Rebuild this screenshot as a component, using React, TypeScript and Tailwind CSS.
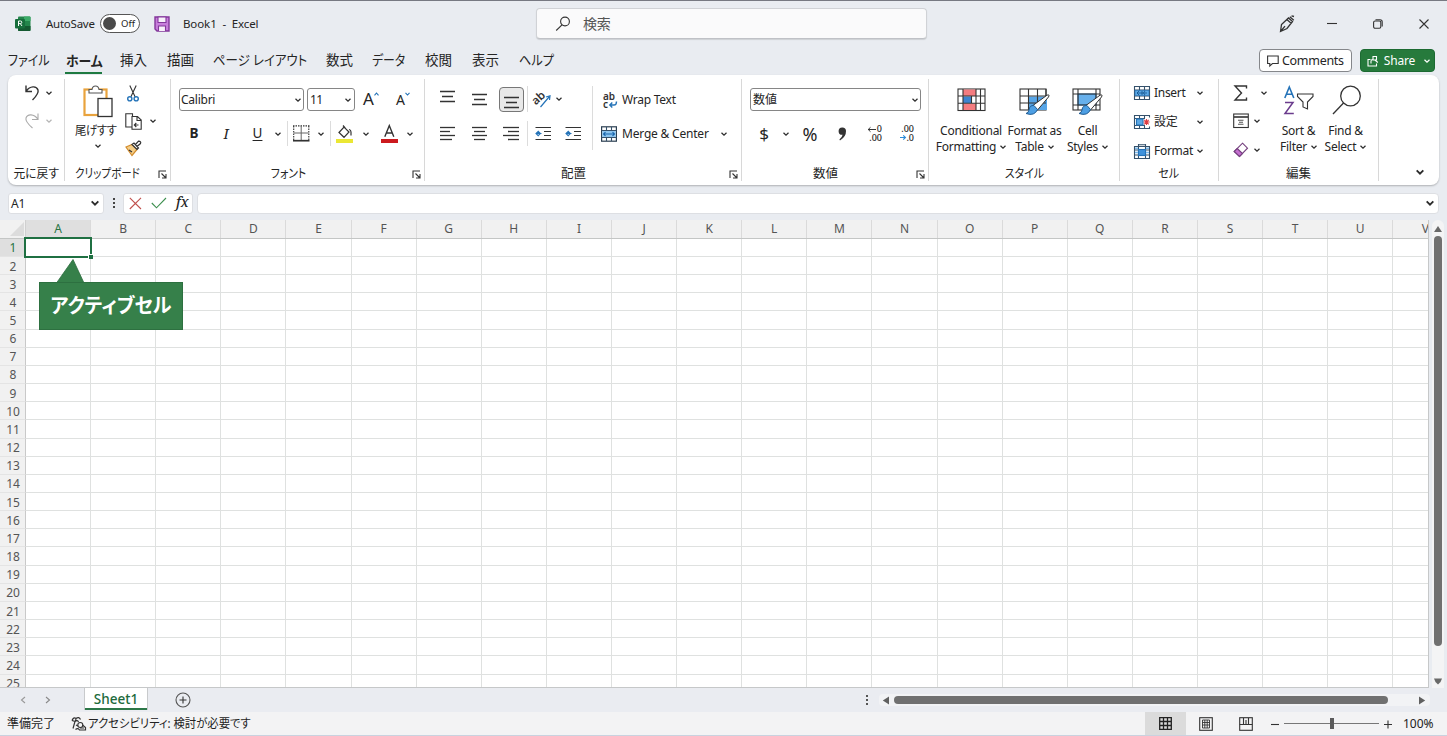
import React from "react";

const COLUMNS = "ABCDEFGHIJKLMNOPQRSTUV".split("");
const ROWS = Array.from({ length: 25 }, (_, i) => i + 1);

type IconProps = { w: number; h: number; children: React.ReactNode; className?: string };

function Icon({ w, h, children, className = "" }: IconProps) {
  return (
    <svg width={w} height={h} viewBox={`0 0 ${w} ${h}`} fill="none" stroke="#333" strokeWidth="1.1" className={`block shrink-0 overflow-visible ${className}`}>
      {children}
    </svg>
  );
}

function Chevron({ className = "", color = "#2b2b2b", strong = false }: { className?: string; color?: string; strong?: boolean }) {
  const s = strong ? 8 : 6;
  return (
    <svg width={s} height={s} viewBox="0 0 6 6" fill="none" stroke={color} strokeWidth={strong ? 1.4 : 1.25} className={`block shrink-0 ${className}`}>
      <path d="M0.5 1.8 L3 4.2 L5.5 1.8" />
    </svg>
  );
}

function Launcher() {
  return (
    <Icon w={9} h={9} className="self-center justify-self-end [grid-area:1/1]">
      <path d="M1 8V1H8M3.5 3.5L8 8M8 4V8H4" />
    </Icon>
  );
}

type GroupProps = { className: string; label: string; labelClass?: string; launcher?: boolean; children: React.ReactNode };

function Group({ className, label, labelClass = "", launcher = false, children }: GroupProps) {
  return (
    <section className={`mt-1 flex h-[102px] shrink-0 flex-col border-r border-[#d8d8d8] ${className}`}>
      <div className="flex h-[88px] shrink-0">{children}</div>
      <div className={`grid h-[17px] grid-cols-1 items-center ${launcher ? "pr-[3px]" : ""}`}>
        <span className={`justify-self-center whitespace-nowrap pt-px text-[12.5px] leading-none [font-feature-settings:'palt'] [grid-area:1/1] ${launcher ? "mr-4" : ""} ${labelClass}`}>{label}</span>
        {launcher && <Launcher />}
      </div>
    </section>
  );
}

function Lines({ xs }: { xs: [number, number][] }) {
  return (
    <Icon w={16} h={17}>
      {xs.map(([a, b], i) => (
        <path key={i} d={`M${a} ${i * 4 + 2.5}H${b}`} strokeWidth="1.3" />
      ))}
    </Icon>
  );
}

function ThreeLines() {
  return (
    <Icon w={16} h={13}>
      <path d="M0 1.5H15M2 6.5H13M0 11.5H15" strokeWidth="1.3" />
    </Icon>
  );
}

function IndentIcon() {
  return (
    <Icon w={16} h={15}>
      <path d="M0.5 1.5H16M9 5.5H16M9 9.5H16M0.5 13.5H16" strokeWidth="1.2" />
      <path d="M6.5 7.5H1M3.2 5.3L1 7.5L3.2 9.7L5.4 7.5Z" stroke="#2473b8" />
    </Icon>
  );
}

function CellsIcon({ kind }: { kind: "insert" | "delete" | "format" | "merge" }) {
  return (
    <Icon w={16} h={16}>
      {kind === "insert" && (
        <>
          <path d="M0.5 1.5H15.5V14.5H0.5ZM0.5 5H15.5M0.5 11H15.5M5.5 1.5V14.5M10.5 1.5V14.5" stroke="#35516b" />
          <rect x="1" y="5.5" width="14" height="5" fill="#5ba8e5" stroke="#2473b8" strokeWidth="0.7" />
          <path d="M3 8H13M5 6L3 8L5 10M8 6V10M11 6L9.5 8L11 10" stroke="#12508c" strokeWidth="0.8" />
        </>
      )}
      {kind === "delete" && (
        <>
          <path d="M15.5 3.5V1.5H0.5V14.5H15.5V12.5M0.5 4.5H11M0.5 11.5H11M5.5 1.5V14.5M10.5 1.5V4M10.5 11.5V14.5" stroke="#35516b" />
          <rect x="2.5" y="5" width="6.5" height="6" fill="#5ba8e5" stroke="#2473b8" />
          <path d="M10.3 5.8L14.7 10.4M14.7 5.8L10.3 10.4M9.6 8H15.6M12.5 5V11" stroke="#dc3b40" strokeWidth="1.1" />
        </>
      )}
      {kind === "format" && (
        <>
          <path d="M0.5 3.5H15.5V15.5H0.5ZM0.5 7H15.5M0.5 12H15.5M4.5 1V15.5M11.5 1V15.5M4.5 1.8H11.5" stroke="#35516b" />
          <rect x="4.5" y="6.5" width="7" height="6" fill="#3f92dc" stroke="#2473b8" />
          <path d="M1 5.2H4M12 5.2H15M1 9.5H4M12 9.5H15" stroke="#7db9ea" strokeWidth="1.6" />
        </>
      )}
      {kind === "merge" && (
        <>
          <rect x="0.6" y="0.8" width="14.8" height="14.4" stroke="#2b3f52" strokeWidth="1.2" />
          <path d="M0.5 4.5H15.5M0.5 11.5H15.5M5.5 1V4.5M10.5 1V4.5M5.5 11.5V15M10.5 11.5V15" stroke="#35516b" />
          <rect x="1.2" y="5" width="13.6" height="6" fill="#8cc4ee" stroke="none" />
          <path d="M2.5 8H13.5M4.5 6.2L2.5 8L4.5 9.8M11.5 6.2L13.5 8L11.5 9.8" stroke="#1765ac" />
        </>
      )}
    </Icon>
  );
}

function BrushOverlay() {
  return (
    <g transform="translate(1.5 0)">
      <path d="M11 18.5L26.5 7.2Q29.5 6 28 9L17 22Z" fill="#fff" strokeWidth="1" />
      <path d="M13.5 17.5Q9 17 8.5 22Q8 25 5.5 25.5Q14 28.5 17 21.5Z" fill="#4d9fe4" stroke="#215d94" strokeWidth="1" />
    </g>
  );
}

function TitleBar() {
  return (
    <header className="flex h-[46px] shrink-0 items-center border-t border-[#777982]">
      <Icon w={16} h={16} className="ml-[15px]">
        <rect x="3" y="0.5" width="12.5" height="14.5" rx="1" fill="#23854b" stroke="none" />
        <path d="M9 .5H14.5Q15.5 .5 15.5 1.5V5H9Z" fill="#3cab68" stroke="none" />
        <path d="M3 10H15.5V14Q15.5 15 14.5 15H4Q3 15 3 14Z" fill="#145931" stroke="none" />
        <rect x="0" y="3" width="10" height="9.5" rx="1" fill="#176e3c" stroke="none" />
        <path d="M3.5 10V5H5.4Q6.8 5 6.8 6.3T5.4 7.6H4M5.3 7.6L7 10" stroke="#fff" strokeWidth="1" />
      </Icon>
      <span className="ml-[15px] w-[49px] whitespace-nowrap text-[11.5px] tracking-[-0.25px]">AutoSave</span>
      <div className="ml-[5px] flex h-[19px] w-[40px] items-center rounded-full border border-[#555] bg-white pl-[2px]">
        <span className="size-[13px] rounded-full bg-[#4a4a4a]" />
        <span className="ml-[5px] text-[9.5px] leading-none">Off</span>
      </div>
      <Icon w={16} h={16} className="ml-[14px]">
        <path d="M1 1H15V15H3L1 13Z" fill="#c77ddb" stroke="#83379b" strokeWidth="1.4" />
        <path d="M4 1H12V6.5H4Z" fill="#f7effa" stroke="#83379b" />
        <path d="M4.5 15V10H11.5V15" fill="#f7effa" stroke="#83379b" />
      </Icon>
      <span className="ml-[13px] w-[80px] whitespace-pre text-[11.5px] tracking-[-0.1px]">Book1  -  Excel</span>
      <div className="ml-[273px] flex h-[31px] w-[391px] items-center rounded-[4px] border border-[#d0d2d6] border-b-[#bfc1c6] bg-[#fafafb] shadow-[0_1px_1px_rgba(0,0,0,0.12)]">
        <Icon w={16} h={16} className="ml-[18px]">
          <circle cx="10" cy="5.5" r="4.4" />
          <path d="M7 8.8L1.2 14.5" />
        </Icon>
        <span className="ml-[12px] text-[14px] leading-none tracking-[-0.3px] text-[#555]">検索</span>
      </div>
      <Icon w={18} h={18} className="ml-[351px]">
        <path d="M2.5 16.5L3.5 9.5L10.5 3L14.5 6.5L9 13.5ZM2.5 16.5L7 11.2M8.8 4.5L13.2 8.2M11.8 1.8L15.8 5.2M13.5 .8L16 1.5" strokeWidth="1.3" />
      </Icon>
      <Icon w={10} h={10} className="ml-[31px]"><path d="M0 4.5H10" /></Icon>
      <Icon w={10} h={10} className="ml-[36px]">
        <rect x="0.6" y="2" width="7.2" height="7.2" rx="1.5" />
        <path d="M2.5 .8H7Q9.2 .8 9.2 3V7.5" />
      </Icon>
      <Icon w={10} h={10} className="ml-[36px]"><path d="M0.5 .5L9.5 9.5M9.5 .5L.5 9.5" /></Icon>
    </header>
  );
}

function MenuBar() {
  const tab = "origin-left whitespace-nowrap shrink-0";
  return (
    <nav className="flex h-[29px] shrink-0 items-center text-[13.5px] [font-feature-settings:'palt']">
      <span className={`${tab} ml-[8px] w-[57px] scale-x-[0.89]`}>ファイル</span>
      <span className="mt-[1px] h-[25px] w-[37px] shrink-0 whitespace-nowrap border-b-[2px] border-[#1e7a41] text-center font-bold leading-[24px]">
        <span className="inline-block scale-x-[0.95]">ホーム</span>
      </span>
      <span className={`${tab} ml-[18px] w-[47px]`}>挿入</span>
      <span className={`${tab} w-[46px]`}>描画</span>
      <span className={`${tab} w-[113px] scale-x-[0.92]`}>ページ レイアウト</span>
      <span className={`${tab} w-[46px]`}>数式</span>
      <span className={`${tab} w-[53px] scale-x-[0.88]`}>データ</span>
      <span className={`${tab} w-[47px]`}>校閲</span>
      <span className={`${tab} w-[47px]`}>表示</span>
      <span className={`${tab} w-[40px] scale-x-[0.9]`}>ヘルプ</span>
      <button className="ml-auto flex h-[23px] w-[93px] items-center rounded-[4px] border border-[#85878b] bg-white pl-[7px]">
        <Icon w={12} h={12}><path d="M.6 1H11.2V8.5H5.5L2.8 11V8.5H.6Z" /></Icon>
        <span className="ml-[3px] whitespace-nowrap pt-px text-[12.5px] tracking-[-0.3px]">Comments</span>
      </button>
      <button className="ml-[8px] mr-[12px] flex h-[23px] w-[75px] items-center rounded-[4px] border border-[#1c6a32] bg-[#267a3c] pl-[6px] text-white">
        <Icon w={12} h={12}>
          <path d="M3.5 4.5H1V11H9.5V8.5M4 8.5V6Q4 4.5 6 4.5M6 1.5H9.5V5H6Z" stroke="#fff" />
          <path d="M8 5L10.8 7.5" stroke="#fff" />
        </Icon>
        <span className="ml-[4px] w-[33px] pt-px text-[12px] tracking-[-0.15px]">Share</span>
        <Chevron color="#fff" className="ml-[8px]" />
      </button>
    </nav>
  );
}

function Divider({ className = "" }: { className?: string }) {
  return <span className={`w-px shrink-0 bg-[#dcdcdc] ${className}`} />;
}

function FontGroup() {
  return (
    <Group className="w-[254px]" label="フォント" labelClass="scale-x-[0.86]" launcher>
      <div className="flex flex-col pl-[8px] pt-[9px]">
        <div className="flex h-[23px] items-center">
          <div className="flex h-[23px] w-[125px] items-center justify-between rounded-[3px] border border-[#868686] pl-px pr-[2px]">
            <span className="text-[12px] tracking-[-0.25px]">Calibri</span>
            <Chevron />
          </div>
          <div className="ml-[3px] flex h-[23px] w-[48px] items-center justify-between rounded-[3px] border border-[#868686] pl-[2px] pr-[3px]">
            <span className="text-[12px] tracking-[-0.5px]">11</span>
            <Chevron />
          </div>
          <span className="-mt-[3px] ml-[8px] w-[11px] text-[17px] leading-none">A</span>
          <Icon w={5} h={4} className="mb-[12px]"><path d="M.5 3.3L2.5 1L4.5 3.3" stroke="#2473b8" /></Icon>
          <span className="ml-[17px] w-[9px] text-[14px] leading-none">A</span>
          <Icon w={5} h={4} className="mb-[12px]"><path d="M.5 .8L2.5 3L4.5 .8" stroke="#2473b8" /></Icon>
        </div>
        <div className="mt-[10px] flex h-[25px] items-center">
          <b className="ml-[9px] w-[12px] text-center text-[13.5px]">B</b>
          <i className="ml-[20px] w-[12px] text-center font-['Noto_Serif','Liberation_Serif',serif] text-[14px]">I</i>
          <u className="ml-[19px] w-[13px] text-center text-[13.5px] underline-offset-2">U</u>
          <Chevron className="ml-[11px]" />
          <Divider className="ml-[6px] h-[25px]" />
          <Icon w={17} h={17} className="ml-[5px]">
            <path d="M.7 1V15M15.8 1V15M0 .9H16.5" strokeDasharray="1.5 1" />
            <path d="M8.2 1V15M1 8H15.5" stroke="#666" strokeWidth="1" />
            <path d="M0 15.7H16.5" strokeWidth="1.7" />
          </Icon>
          <Chevron className="ml-[8px]" />
          <Divider className="ml-[6px] h-[25px]" />
          <Icon w={17} h={18} className="ml-[5px]">
            <path d="M3 7.5L8 2L13 7L8 12.3ZM7 .5L9.2 3M13 4.5Q15 4.8 15 7V10.5" strokeWidth="1.2" />
            <path d="M0 16H17" stroke="#ebe734" strokeWidth="4" />
          </Icon>
          <Chevron className="ml-[10px]" />
          <Icon w={17} h={18} className="ml-[12px]">
            <path d="M3.8 11.8L8.3 .6L12.8 11.8M5.4 8H11.2" strokeWidth="1.4" />
            <path d="M0 16H17" stroke="#cc1a1e" strokeWidth="4" />
          </Icon>
          <Chevron className="ml-[9px]" />
        </div>
      </div>
    </Group>
  );
}

function AlignRow() {
  return (
    <div className="mt-[9px] flex h-[25px] items-center">
      <Lines xs={[[0, 15], [0, 10], [0, 15], [0, 12]]} />
      <Lines xs={[[16, 31], [18, 29], [16, 31], [18, 29]]} />
      <Lines xs={[[31, 47], [36, 47], [31, 47], [36, 47]]} />
      <Divider className="ml-[39px] h-[25px]" />
      <span className="w-[7px]" />
      <IndentIcon />
      <span className="w-[14px]" />
      <IndentIcon />
    </div>
  );
}

function AlignmentGroup() {
  return (
    <Group className="w-[317px]" label="配置" launcher>
      <div className="flex w-[167px] shrink-0 flex-col pl-[15px] pt-[7px]">
        <div className="flex h-[26px] items-center">
          <div className="mb-[6px]"><ThreeLines /></div>
          <div className="ml-[16px]"><ThreeLines /></div>
          <div className="ml-[11px] flex h-[25px] w-[25px] items-end justify-center rounded-[4px] border border-[#777] bg-[#e9e9e9] pb-[2px]">
            <ThreeLines />
          </div>
          <Divider className="ml-[3px] h-[26px]" />
          <Icon w={17} h={17} className="ml-[6px]">
            <text x="-2.5" y="10.5" transform="rotate(-42 5 7)" fontSize="11.5" fontWeight="600" fill="#333" stroke="none">ab</text>
            <path d="M6.5 16L15 6M12 6L16 4.8L15.5 9" stroke="#2473b8" strokeWidth="1.2" />
          </Icon>
          <Chevron className="ml-[5px]" />
        </div>
        <AlignRow />
      </div>
      <Divider className="mt-[7px] h-[64px]" />
      <div className="flex flex-col pl-[8px] pt-[8px]">
        <div className="flex h-[26px] items-center">
          <Icon w={16} h={17} className="ml-px">
            <text x="1" y="7.8" fontSize="10" fontWeight="600" fill="#333" stroke="none">ab</text>
            <text x="1" y="16" fontSize="10" fontWeight="600" fill="#333" stroke="none">c</text>
            <path d="M8 13H12Q14.5 13 14.5 9.5M10.3 10.5L7.8 13L10.3 15.5" stroke="#2473b8" strokeWidth="1.4" />
          </Icon>
          <span className="ml-[4px] whitespace-nowrap text-[12px] tracking-[-0.25px]">Wrap Text</span>
        </div>
        <div className="mt-[8px] flex h-[25px] items-center">
          <CellsIcon kind="merge" />
          <span className="ml-[5px] w-[88px] whitespace-nowrap text-[12px] tracking-[-0.2px]">Merge &amp; Center</span>
          <Chevron className="ml-[11px]" />
        </div>
      </div>
    </Group>
  );
}

function NumberGroup() {
  return (
    <Group className="w-[187px]" label="数値" launcher>
      <div className="flex flex-col pl-[8px] pt-[9px]">
        <div className="flex h-[23px] w-[171px] items-center justify-between rounded-[3px] border border-[#868686] pl-[2px] pr-[2px]">
          <span className="text-[12px] leading-none">数値</span>
          <Chevron />
        </div>
        <div className="mt-[10px] flex h-[25px] items-center">
          <span className="ml-[8px] w-[12px] text-center text-[17px] leading-none">$</span>
          <Chevron className="ml-[13px]" />
          <span className="ml-[12px] w-[18px] text-center text-[18px] leading-none">%</span>
          <Icon w={9} h={14} className="ml-[19px]">
            <path d="M.6 4.2A3.6 3.6 0 0 1 8 4Q8.2 9.8 2 13.4L1.4 12.4Q4.3 10 4.6 7.8Q.6 8 .6 4.2Z" fill="#333" stroke="none" />
          </Icon>
          <div className="ml-[18px] flex w-[17px] flex-col items-end text-[9px] font-medium leading-[8.5px]">
            <span className="flex items-center gap-[1px]">
              <Icon w={9} h={7}><path d="M9 3.5H1M3.5 1.3L1.2 3.5L3.5 5.7" strokeWidth="1" /></Icon>
              0
            </span>
            <span>.00</span>
          </div>
          <div className="ml-[14px] flex w-[18px] flex-col items-end text-[9px] font-medium leading-[8.5px]">
            <span>.00</span>
            <span className="flex items-center">
              <Icon w={6} h={7}><path d="M0 3.5H5.5M3.2 1.3L5.5 3.5L3.2 5.7" stroke="#2c8bd8" strokeWidth="1.1" /></Icon>
              .0
            </span>
          </div>
        </div>
      </div>
    </Group>
  );
}

function BigLabel({ top, bottom, className = "" }: { top: string; bottom: string; className?: string }) {
  return (
    <div className={`flex flex-col items-center whitespace-nowrap text-[12px] leading-[16px] tracking-[-0.25px] ${className}`}>
      <span>{top}</span>
      <span className="flex items-center gap-[4px]">{bottom}<Chevron /></span>
    </div>
  );
}

function StylesGroup() {
  return (
    <Group className="w-[191px]" label="スタイル" labelClass="scale-x-[0.88]">
      <div className="flex w-[73px] flex-col items-center pl-[11px] pt-[9px]">
        <Icon w={29} h={28}>
          <rect x="1" y="1" width="27" height="21.5" fill="#fff" />
          <rect x="6" y="1.5" width="13" height="6.5" fill="#f47c80" stroke="none" />
          <rect x="6" y="15.5" width="13" height="6.5" fill="#f47c80" stroke="none" />
          <rect x="6" y="8.5" width="8.5" height="6.5" fill="#3d84d0" stroke="none" />
          <path d="M1 8H28M1 15.2H28M6 1V22.5M19 1V22.5M23.5 1V22.5M14.5 8V15" />
        </Icon>
        <BigLabel top="Conditional" bottom="Formatting" className="mt-[7px]" />
      </div>
      <div className="flex w-[60px] flex-col items-center pl-[5px] pt-[9px]">
        <Icon w={32} h={28}>
          <rect x="1" y="1" width="26" height="21" fill="#fff" />
          <path d="M10 8.5H28V22H10Z" fill="#57a5e7" stroke="none" />
          <path d="M1 8H27M1 15H27M9.5 1V22M18.5 1V22M27 1V8" />
          <BrushOverlay />
        </Icon>
        <BigLabel top="Format as" bottom="Table" className="mt-[7px]" />
      </div>
      <div className="flex w-[50px] flex-col items-center pl-px pt-[9px]">
        <Icon w={32} h={28}>
          <rect x="1" y="1" width="27" height="21" fill="#fff" />
          <rect x="6" y="6" width="18" height="11" fill="#67b0ec" stroke="#2976b8" />
          <path d="M1 6H28M1 17H28M6 1V22M24 1V22" />
          <BrushOverlay />
        </Icon>
        <BigLabel top="Cell" bottom="Styles" className="mt-[7px]" />
      </div>
    </Group>
  );
}

function CellsGroup() {
  const rows: { kind: "insert" | "delete" | "format"; label: string }[] = [
    { kind: "insert", label: "Insert" },
    { kind: "delete", label: "設定" },
    { kind: "format", label: "Format" },
  ];
  return (
    <Group className="w-[99px]" label="セル" labelClass="scale-x-[0.88]">
      <div className="flex flex-col pl-[14px] pt-px">
        {rows.map((r) => (
          <div key={r.kind} className="flex h-[29px] items-center pb-[3px]">
            <CellsIcon kind={r.kind} />
            <span className="ml-[4px] w-[42px] whitespace-nowrap text-[12px] tracking-[-0.3px]">{r.label}</span>
            <Chevron className="ml-px" />
          </div>
        ))}
      </div>
    </Group>
  );
}

function EditingGroup() {
  return (
    <Group className="w-[160px]" label="編集">
      <div className="flex w-[48px] flex-col pl-[14px]">
        <div className="flex h-[27px] items-center">
          <Icon w={16} h={16}><path d="M13.5 3.5V1H2L8.5 8L2 15H13.5V12.5" strokeWidth="1.4" /></Icon>
          <Chevron className="ml-[12px]" />
        </div>
        <div className="flex h-[29px] items-center">
          <Icon w={16} h={16}>
            <rect x=".7" y="1" width="14.6" height="13.5" />
            <path d="M1 4H15" strokeWidth="1.6" />
            <path d="M5 7.2H10.5M6 9.2H10M5 11.3H10.5" stroke="#555" />
          </Icon>
          <Chevron className="ml-[5px]" />
        </div>
        <div className="flex h-[29px] items-center">
          <Icon w={16} h={16}>
            <path d="M9.5 1.2L14.5 6.2L6.5 14.5L1.2 9.5Z" fill="#fff" stroke="#75407f" />
            <path d="M4.2 6.5L9.5 11.5L6.5 14.5L1.2 9.5Z" fill="#c56fd0" stroke="#75407f" />
          </Icon>
          <Chevron className="ml-[5px]" />
        </div>
      </div>
      <div className="flex w-[57px] flex-col items-center pl-[6px] pt-[6px]">
        <Icon w={32} h={30}>
          <path d="M1.8 13L6.3 2L10.8 13M3.5 9.3H9.2" stroke="#2473b8" strokeWidth="1.6" />
          <path d="M2 17.5H10L2 28.5H10.8" stroke="#6b3c8d" strokeWidth="1.5" />
          <path d="M14.5 9H30V11.5L24.5 17V24L20 22V17L14.5 11.5Z" />
        </Icon>
        <BigLabel top="Sort &" bottom="Filter" className="mt-[8px]" />
      </div>
      <div className="flex w-[43px] flex-col items-center pt-[6px]">
        <Icon w={30} h={30} className="ml-[3px]">
          <circle cx="18.5" cy="11" r="9.8" strokeWidth="1.3" />
          <path d="M11.5 18L1 29" strokeWidth="1.3" />
        </Icon>
        <BigLabel top="Find &" bottom="Select" className="mt-[8px]" />
      </div>
    </Group>
  );
}

function Ribbon() {
  return (
    <div className="mx-[8px] flex h-[110px] shrink-0 rounded-[8px] bg-white shadow-[0_1px_2px_rgba(0,0,0,0.25)]">
      <Group className="w-[57px]" label="元に戻す" labelClass="scale-x-[0.94]">
        <div className="flex flex-col pl-[16px] pt-[4px]">
          <div className="flex h-[20px] items-center">
            <Icon w={16} h={18}>
              <path d="M2 1.5V7.5H8M2.3 7C6 1.8 12.5 1.5 14 6Q15 9.5 8.5 16" strokeWidth="1.4" />
            </Icon>
            <Chevron className="ml-[6px]" />
          </div>
          <div className="mt-[8px] flex h-[20px] items-center">
            <Icon w={16} h={18}>
              <path d="M14 1.5V7.5H8M13.7 7C10 1.8 3.5 1.5 2 6Q1 9.5 8.5 16" stroke="#aaa" />
            </Icon>
            <Chevron className="ml-[6px]" color="#b5b5b5" />
          </div>
        </div>
      </Group>
      <Group className="w-[106px]" label="クリップボード" labelClass="scale-x-[0.84]" launcher>
        <div className="flex w-[60px] flex-col items-center pl-[5px] pt-[6px]">
          <Icon w={30} h={33} className="ml-px">
            <rect x="1.5" y="4.5" width="22" height="25.5" fill="#fff" stroke="#e9a33d" strokeWidth="2.2" />
            <path d="M6 8V4.5H9Q9.5 1 12.5 1T16 4.5H19V8Z" fill="#fff" stroke="#555" />
            <rect x="15" y="13.5" width="14" height="18" fill="#fff" strokeWidth="1.3" />
          </Icon>
          <span className="-ml-[3px] mt-[6px] scale-x-[0.95] whitespace-nowrap text-[12px] leading-[13px] tracking-[-0.5px] [font-feature-settings:'palt']">尾げすす</span>
          <Chevron className="mt-[6px]" />
        </div>
        <div className="flex flex-col">
          <div className="flex h-[28px] items-center">
            <Icon w={16} h={17}>
              <path d="M4.8 .5L10.2 12M11.2 .5L5.8 12" />
              <circle cx="4.8" cy="13.8" r="2.1" stroke="#2473b8" strokeWidth="1.4" />
              <circle cx="11.2" cy="13.8" r="2.1" stroke="#2473b8" strokeWidth="1.4" />
            </Icon>
          </div>
          <div className="flex h-[28px] items-center">
            <Icon w={17} h={17}>
              <path d="M7 14H.8V.8H7.5V3" />
              <path d="M7 3.5H12.5L16.2 7V16.2H7ZM12 3.5V7.5H16M9.5 12H13.5M11.3 10L9.3 12L11.3 14" />
            </Icon>
            <Chevron className="ml-[8px]" />
          </div>
          <div className="flex h-[26px] items-center">
            <Icon w={17} h={17}>
              <path d="M1 7L7 4.5L12 9.5L7 15.5Z" fill="#f5ce87" stroke="#d28c2d" strokeWidth="1.2" />
              <path d="M4 10L7 12M7 4.5L9 3L13.5 8L12 9.5ZM10.5 4.5L13.5 1.2Q16.5 1.5 15.5 3.5L12 6.5" fill="#fff" strokeWidth="1.2" />
            </Icon>
          </div>
        </div>
      </Group>
      <FontGroup />
      <AlignmentGroup />
      <NumberGroup />
      <StylesGroup />
      <CellsGroup />
      <EditingGroup />
      <Chevron strong className="mb-[9px] ml-auto mr-[15px] self-end" />
    </div>
  );
}

function FormulaBar() {
  return (
    <div className="mt-[7px] flex h-[22px] shrink-0 items-center">
      <div className="ml-[8px] flex h-[21px] w-[96px] items-center justify-between rounded-[3px] border border-[#dddfe3] bg-white pl-[2px] pr-[4px]">
        <span className="pt-px text-[12px] tracking-[-0.1px]">A1</span>
        <Chevron strong />
      </div>
      <span className="ml-[9px] flex flex-col gap-[2px]">
        <i className="size-[2px] bg-[#444]" />
        <i className="size-[2px] bg-[#444]" />
        <i className="size-[2px] bg-[#444]" />
      </span>
      <div className="ml-[8px] flex h-[21px] w-[70px] items-center rounded-[3px] border border-[#dddfe3] bg-white pl-[5px]">
        <Icon w={13} h={13}><path d="M.8 .8L12 12M12 .8L.8 12" stroke="#c0504d" /></Icon>
        <Icon w={16} h={12} className="ml-[9px]"><path d="M.8 6L5.5 10.8L15 1" stroke="#3d8f4f" /></Icon>
        <span className="-mt-[2px] ml-[9px] font-['Noto_Serif','Liberation_Serif',serif] text-[14px] font-medium italic leading-none">fx</span>
      </div>
      <div className="ml-[4px] mr-[8px] flex h-[21px] flex-1 items-center justify-end rounded-[4px] border border-[#dddfe3] bg-white pr-[4px]">
        <Chevron strong />
      </div>
    </div>
  );
}

function Sheet() {
  return (
    <div className="relative flex h-[468px] w-[1429px] shrink-0 flex-col overflow-hidden border-b border-r border-[#c6c8c9] bg-white text-[12px] text-[#555]">
      <div className="flex h-[18.8px] shrink-0 border-b border-[#c4c6c5] bg-[#f1f1f1]">
        <div className="flex w-[26px] shrink-0 items-end justify-end border-r border-[#d0d0d0] pb-[2px] pr-px">
          <Icon w={14} h={14}><path d="M14 0V14H0Z" fill="#dcdcdc" stroke="none" /></Icon>
        </div>
        {COLUMNS.map((c) => (
          <div
            key={c}
            className={`flex w-[65.12px] shrink-0 items-center justify-center border-r border-[#dadada] pt-px leading-none ${c === "A" ? "bg-[#dfdfdf] text-[#277443]" : ""}`}
          >
            {c}
          </div>
        ))}
      </div>
      {ROWS.map((r) => (
        <div key={r} className="flex h-[18.17px] shrink-0">
          <div className={`flex w-[26px] shrink-0 items-center justify-center border-b border-r border-b-[#e4e4e4] border-r-[#c9c9c9] pl-px pt-[2px] leading-none ${r === 1 ? "bg-[#dfdfdf] text-[#277443]" : "bg-[#f1f1f1]"}`}>
            {r}
          </div>
          {COLUMNS.map((c) => (
            <div key={c} className="w-[65.12px] shrink-0 border-b border-r border-[#dfe1e0]" />
          ))}
        </div>
      ))}
      <div className="absolute left-[24px] top-[17px] h-[21px] w-[68px] border-2 border-[#1f7042]" />
      <div className="absolute left-[88px] top-[34px] size-[5px] border-l border-t border-white bg-[#1f7042]" />
      <div className="absolute left-[39px] top-[39px] flex flex-col">
        <Icon w={30} h={24} className="-mb-px ml-[17px]">
          <path d="M.5 24L17 .5L28 24Z" fill="#36804a" stroke="none" />
          <path d="M.5 24L17 .5L28 24" stroke="#2a6b3c" strokeWidth="0.8" />
        </Icon>
        <div className="flex h-[48px] w-[144px] items-center justify-center border border-[#2d7040] bg-[#36804a] text-[20px] font-bold leading-none text-white [font-feature-settings:'palt']">
          <span className="scale-x-[0.96] whitespace-nowrap">アクティブセル</span>
        </div>
      </div>
    </div>
  );
}

function SheetArea() {
  return (
    <div className="mt-[6px] flex h-[468px] shrink-0">
      <Sheet />
      <div className="ml-[3px] flex w-[12px] flex-col items-center rounded-t-[6px] bg-[#f4f4f5]">
        <Icon w={10} h={8} className="mt-[5px]"><path d="M1 7L5 1L9 7Z" fill="#696969" stroke="none" /></Icon>
        <div className="mt-[3px] h-[410px] w-[8px] rounded-full bg-[#707070]" />
        <Icon w={10} h={8} className="mt-[31px]"><path d="M1 1.5H9Q8.5 4.5 5 7.5Q1.5 4.5 1 1.5Z" fill="#696969" stroke="none" /></Icon>
      </div>
    </div>
  );
}

function TabBar() {
  return (
    <div className="flex h-[24px] shrink-0 items-center bg-[#eaecf1]">
      <Icon w={6} h={8} className="ml-[20px]"><path d="M5 1L1.5 4L5 7" stroke="#999" /></Icon>
      <Icon w={6} h={8} className="ml-[19px]"><path d="M1 1L4.5 4L1 7" stroke="#888" /></Icon>
      <div className="ml-[34px] flex h-[22px] w-[62px] items-center justify-center self-start border-b-2 border-[#2c7748] bg-white pt-[3px] text-[13.5px] font-medium leading-none text-[#216a3b] shadow-[1px_0_0_#c8cacc,-1px_0_0_#c8cacc]">
        Sheet1
      </div>
      <Icon w={16} h={16} className="ml-[28px]">
        <circle cx="8" cy="8" r="7" stroke="#555" />
        <path d="M8 4.5V11.5M4.5 8H11.5" />
      </Icon>
      <span className="ml-auto flex flex-col gap-[2px]">
        <i className="size-[2px] bg-[#555]" />
        <i className="size-[2px] bg-[#555]" />
        <i className="size-[2px] bg-[#555]" />
      </span>
      <div className="ml-[11px] mr-[17px] flex h-[12px] w-[551px] items-center rounded-[4px] bg-[#f2f3f5]">
        <Icon w={8} h={9} className="ml-[3px]"><path d="M7 .5V8.5L.8 4.5Z" fill="#606060" stroke="none" /></Icon>
        <div className="ml-[4px] h-[8px] w-[494px] rounded-full bg-[#707070]" />
        <Icon w={8} h={9} className="ml-[30px]"><path d="M1 .5V8.5L7.2 4.5Z" fill="#606060" stroke="none" /></Icon>
      </div>
    </div>
  );
}

function StatusBar() {
  return (
    <footer className="flex h-[24px] shrink-0 items-center border-b border-[#c9d2df] bg-[#f3f3f4] text-[12px] text-[#222]">
      <span className="ml-[7px] w-[50px] whitespace-nowrap pt-px">準備完了</span>
      <Icon w={16} h={16} className="ml-[14px]">
        <path d="M1 4.5Q2.5 .8 5 2.5Q8 .3 9.5 3.5M1 4.5L4 5.5L2 12.5M4 5.5Q6.5 3.5 7.5 6M5 2.5L4.5 5.5" strokeWidth="1.2" />
        <circle cx="9.3" cy="9" r="2.5" />
        <path d="M4.5 13.5Q7 11.5 8.5 14H14.5V11.5L11.5 9M5 9L7 10M9 12L13 12" strokeWidth="1.2" />
      </Icon>
      <span className="ml-[1px] origin-left scale-x-[0.945] whitespace-nowrap pt-px [font-feature-settings:'palt']">アクセシビリティ: 検討が必要です</span>
      <div className="ml-auto flex h-[23px] w-[41px] items-center justify-center bg-[#dbdbdb]">
        <Icon w={13} h={13}><path d="M.7 .7H12.3V12.3H.7ZM.7 4.5H12.3M.7 8.5H12.3M4.5 .7V12.3M8.5 .7V12.3" stroke="#222" strokeWidth="1.3" /></Icon>
      </div>
      <Icon w={14} h={14} className="ml-[13px]">
        <rect x=".7" y=".7" width="12.6" height="12.6" />
        <path d="M3.5 3H10.5V11H3.5ZM3.5 5.5H10.5M3.5 8H10.5M5.8 3V11M8.2 3V11" strokeWidth=".9" />
      </Icon>
      <Icon w={14} h={14} className="ml-[26px]">
        <rect x=".7" y=".7" width="12.6" height="12.6" />
        <path d="M.7 7.5H13.3M4.5 1V7.5M9.5 1V7.5M7 3V7.5" />
      </Icon>
      <Icon w={8} h={8} className="ml-[18px]"><path d="M0 4.5H8" /></Icon>
      <div className="ml-[5px] flex h-[11px] w-[95px] items-center">
        <span className="h-px w-[46px] bg-[#777]" />
        <span className="h-[11px] w-[4px] bg-[#5b5b5b]" />
        <span className="h-px w-[45px] bg-[#777]" />
      </div>
      <Icon w={8} h={8} className="ml-[5px]"><path d="M0 4.5H8M4 .5V8.5" /></Icon>
      <span className="ml-[11px] mr-[11px] w-[33px] whitespace-nowrap pt-px">100%</span>
    </footer>
  );
}

export default function App() {
  return (
    <main className="flex h-[736px] w-[1447px] flex-col overflow-hidden bg-[#e9ecf1] font-['Noto_Sans','Noto_Sans_CJK_JP',sans-serif] text-[#252525]">
      <TitleBar />
      <MenuBar />
      <Ribbon />
      <FormulaBar />
      <SheetArea />
      <TabBar />
      <StatusBar />
    </main>
  );
}
